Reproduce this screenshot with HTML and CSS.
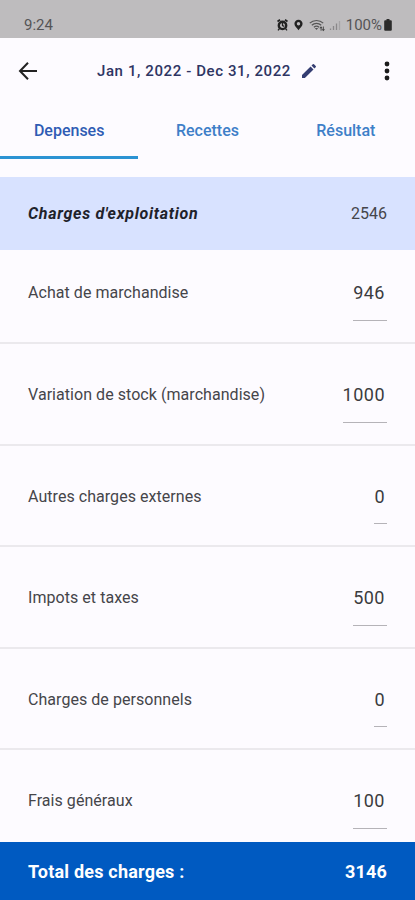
FILE: index.html
```html
<!DOCTYPE html>
<html lang="fr">
<head>
    <meta charset="UTF-8">
    <meta name="viewport" content="width=device-width, initial-scale=1.0">
    <title>Charges</title>
    <link rel="stylesheet" href="styles.css">
</head>
<body>
    <div class="screen">
        <div class="status-bar">
            <span class="clock">9:24</span>
            <div class="status-icons">
                <svg class="icon-alarm" width="11" height="12" viewBox="0 0 11 12">
                    <path d="M0.5 2.5L3 .8M10.5 2.5L8 .8" stroke="#222" stroke-width="1.8"/>
                    <circle cx="5.5" cy="6.4" r="3.7" fill="none" stroke="#222" stroke-width="2.4"/>
                    <path d="M5.5 4v2.6l1.8.8M2.5 9.5L1 11.3M8.5 9.5L10 11.3" fill="none" stroke="#222" stroke-width="1.3"/>
                </svg>
                <svg class="icon-pin" width="9" height="12" viewBox="0 0 9 12">
                    <path fill="#222" fill-rule="evenodd" d="M4.5.8C2.2.8.4 2.5.4 4.8c0 2.6 2.5 4.2 4.1 6.4 1.6-2.2 4.1-3.8 4.1-6.4C8.6 2.5 6.8.8 4.5.8zm0 2.3a1.7 1.7 0 1 1 0 3.4 1.7 1.7 0 0 1 0-3.4z"/>
                </svg>
                <svg class="icon-wifi" width="17" height="13" viewBox="0 0 17 13">
                    <path d="M.8 4.2C4.3.6 10.7.6 14.2 4.2M2.8 6.3c2.6-2.5 6.800-2.500 9.400 0M4.900 8.300c1.500-1.300 3.700-1.300 5.200 0" fill="none" stroke="#555" stroke-width="1.2"/>
                    <path d="M5.8 9l1.700 2L9.200 9z" fill="#555"/>
                    <path d="M10.3 9.3L12 7.3l1.700 2zM12.600 10.300h3.400l-1.700 2zM11.600 9h.9v2.800h-.9zM13.900 7.600h.9v3h-.9z" fill="#444"/>
                </svg>
                <svg class="icon-signal" width="12" height="11" viewBox="0 0 12 11">
                    <path d="M1.500 10V8.500M4.500 10V6M7.500 10V3.500" stroke="#8a888a" stroke-width="1.300"/>
                    <path d="M10.500 10V1" stroke="#a5a3a5" stroke-width="1.300"/>
                </svg>
                <span class="battery-level">100%</span>
                <svg class="icon-battery" width="8" height="12" viewBox="0 0 8 12">
                    <path d="M2.500 0h3v1.200h1.300q1 0 1 1v8.600q0 1-1 1H1.200q-1 0-1-1V2.200q0-1 1-1h1.300z" fill="#2b2b2b"/>
                </svg>
            </div>
        </div>

        <div class="app-bar">
            <svg class="icon-back" width="20" height="20" viewBox="0 0 20 20">
                <path d="M19 10H2.500M10 1.800L2 10l8 8.200" fill="none" stroke="#222" stroke-width="2"/>
            </svg>
            <div class="period">
                <span>Jan 1, 2022 - Dec 31, 2022</span>
                <svg width="14" height="14" viewBox="0 0 14 14">
                    <path d="M0 14v-2.900L8.600 2.500l2.900 2.900L2.900 14zM9.500 1.600L10.800.3q.6-.6 1.200 0l1.700 1.700q.6.600 0 1.200l-1.300 1.300z" fill="#343d72"/>
                </svg>
            </div>
            <svg class="icon-more" width="6" height="20" viewBox="0 0 6 20">
                <circle cx="3" cy="3" r="2.400" fill="#1b1b1b"/>
                <circle cx="3" cy="10" r="2.400" fill="#1b1b1b"/>
                <circle cx="3" cy="17" r="2.400" fill="#1b1b1b"/>
            </svg>
        </div>

        <div class="tabs">
            <div class="tab active">Depenses</div>
            <div class="tab">Recettes</div>
            <div class="tab">Résultat</div>
        </div>

        <div class="section-header">
            <span class="section-title">Charges d'exploitation</span>
            <span class="section-total">2546</span>
        </div>

        <div class="charge-list">
            <div class="charge">
                <span class="charge-label">Achat de marchandise</span>
                <span class="charge-amount">946</span>
            </div>
            <div class="charge">
                <span class="charge-label">Variation de stock (marchandise)</span>
                <span class="charge-amount">1000</span>
            </div>
            <div class="charge">
                <span class="charge-label">Autres charges externes</span>
                <span class="charge-amount">0</span>
            </div>
            <div class="charge">
                <span class="charge-label">Impots et taxes</span>
                <span class="charge-amount">500</span>
            </div>
            <div class="charge">
                <span class="charge-label">Charges de personnels</span>
                <span class="charge-amount">0</span>
            </div>
            <div class="charge">
                <span class="charge-label">Frais généraux</span>
                <span class="charge-amount">100</span>
            </div>
        </div>

        <div class="total-bar">
            <span>Total des charges :</span>
            <span class="total-amount">3146</span>
        </div>
    </div>
</body>
</html>
```

FILE: styles.css
```css
* {
    box-sizing: border-box;
}

body {
    margin: 0;
    font-family: Roboto, sans-serif;
    background: #fdfbff;
    color: #45454a;
}

svg {
    display: block;
    flex: none;
}

.screen {
    display: flex;
    flex-direction: column;
    height: 900px;
    overflow: hidden;
}

.status-bar {
    display: flex;
    flex: none;
    justify-content: space-between;
    align-items: center;
    height: 38px;
    padding: 12px 23px 0 24px;
    background: #bebcbe;
    color: #555456;
    font-size: 15px;
}

.status-icons {
    display: flex;
    align-items: center;
}

.icon-pin {
    margin-left: 6px;
}

.icon-wifi {
    margin-left: 6px;
}

.icon-signal {
    margin-left: 3px;
}

.battery-level {
    margin-left: 5px;
}

.icon-battery {
    margin-left: 2px;
}

.app-bar {
    display: flex;
    flex: none;
    align-items: center;
    height: 66px;
    padding: 0 25px 0 18px;
}

.period {
    display: flex;
    align-items: center;
    gap: 11px;
    margin-left: 59px;
    color: #2e3563;
    font-size: 15px;
    font-weight: 500;
    letter-spacing: 0.6px;
}

.icon-more {
    margin-left: auto;
}

.tabs {
    display: grid;
    flex: none;
    grid-template-columns: repeat(3, 1fr);
    height: 55px;
}

.tab {
    padding-top: 16px;
    border-bottom: 3px solid transparent;
    color: #3e7fc8;
    font-size: 16px;
    font-weight: 500;
    line-height: 21px;
    text-align: center;
}

.tab.active {
    border-color: #2b93d3;
    color: #2f5cb4;
}

.section-header {
    display: flex;
    flex: none;
    justify-content: space-between;
    align-items: center;
    height: 73px;
    margin-top: 18px;
    padding: 0 28px;
    background: #d8e2ff;
}

.section-title {
    color: #1f222b;
    font-size: 16px;
    font-style: italic;
    font-weight: 700;
    letter-spacing: 0.7px;
}

.section-total {
    font-size: 16px;
}

.charge-list {
    flex: 1;
    min-height: 0;
    overflow: hidden;
}

.charge {
    display: flex;
    justify-content: space-between;
    align-items: flex-start;
    height: 101.5px;
    padding: 36px 28px 0;
    border-bottom: 2px solid #ebe9ed;
}

/* the first row is partly tucked under the section header */
.charge:first-child {
    height: 94px;
    padding-top: 28px;
}

.charge-label {
    font-size: 16px;
    line-height: 29px;
    letter-spacing: 0.05px;
}

.charge-amount {
    height: 42.5px;
    padding-right: 2px;
    border-bottom: 1.5px solid #b5b3b8;
    color: #3b3b3e;
    font-size: 18px;
    line-height: 29px;
    letter-spacing: 0.5px;
}

.total-bar {
    display: flex;
    flex: none;
    justify-content: space-between;
    align-items: center;
    height: 58px;
    padding: 0 28px;
    background: #005ac1;
    color: #fff;
    font-size: 18px;
    font-weight: 700;
    letter-spacing: 0.2px;
}
```
